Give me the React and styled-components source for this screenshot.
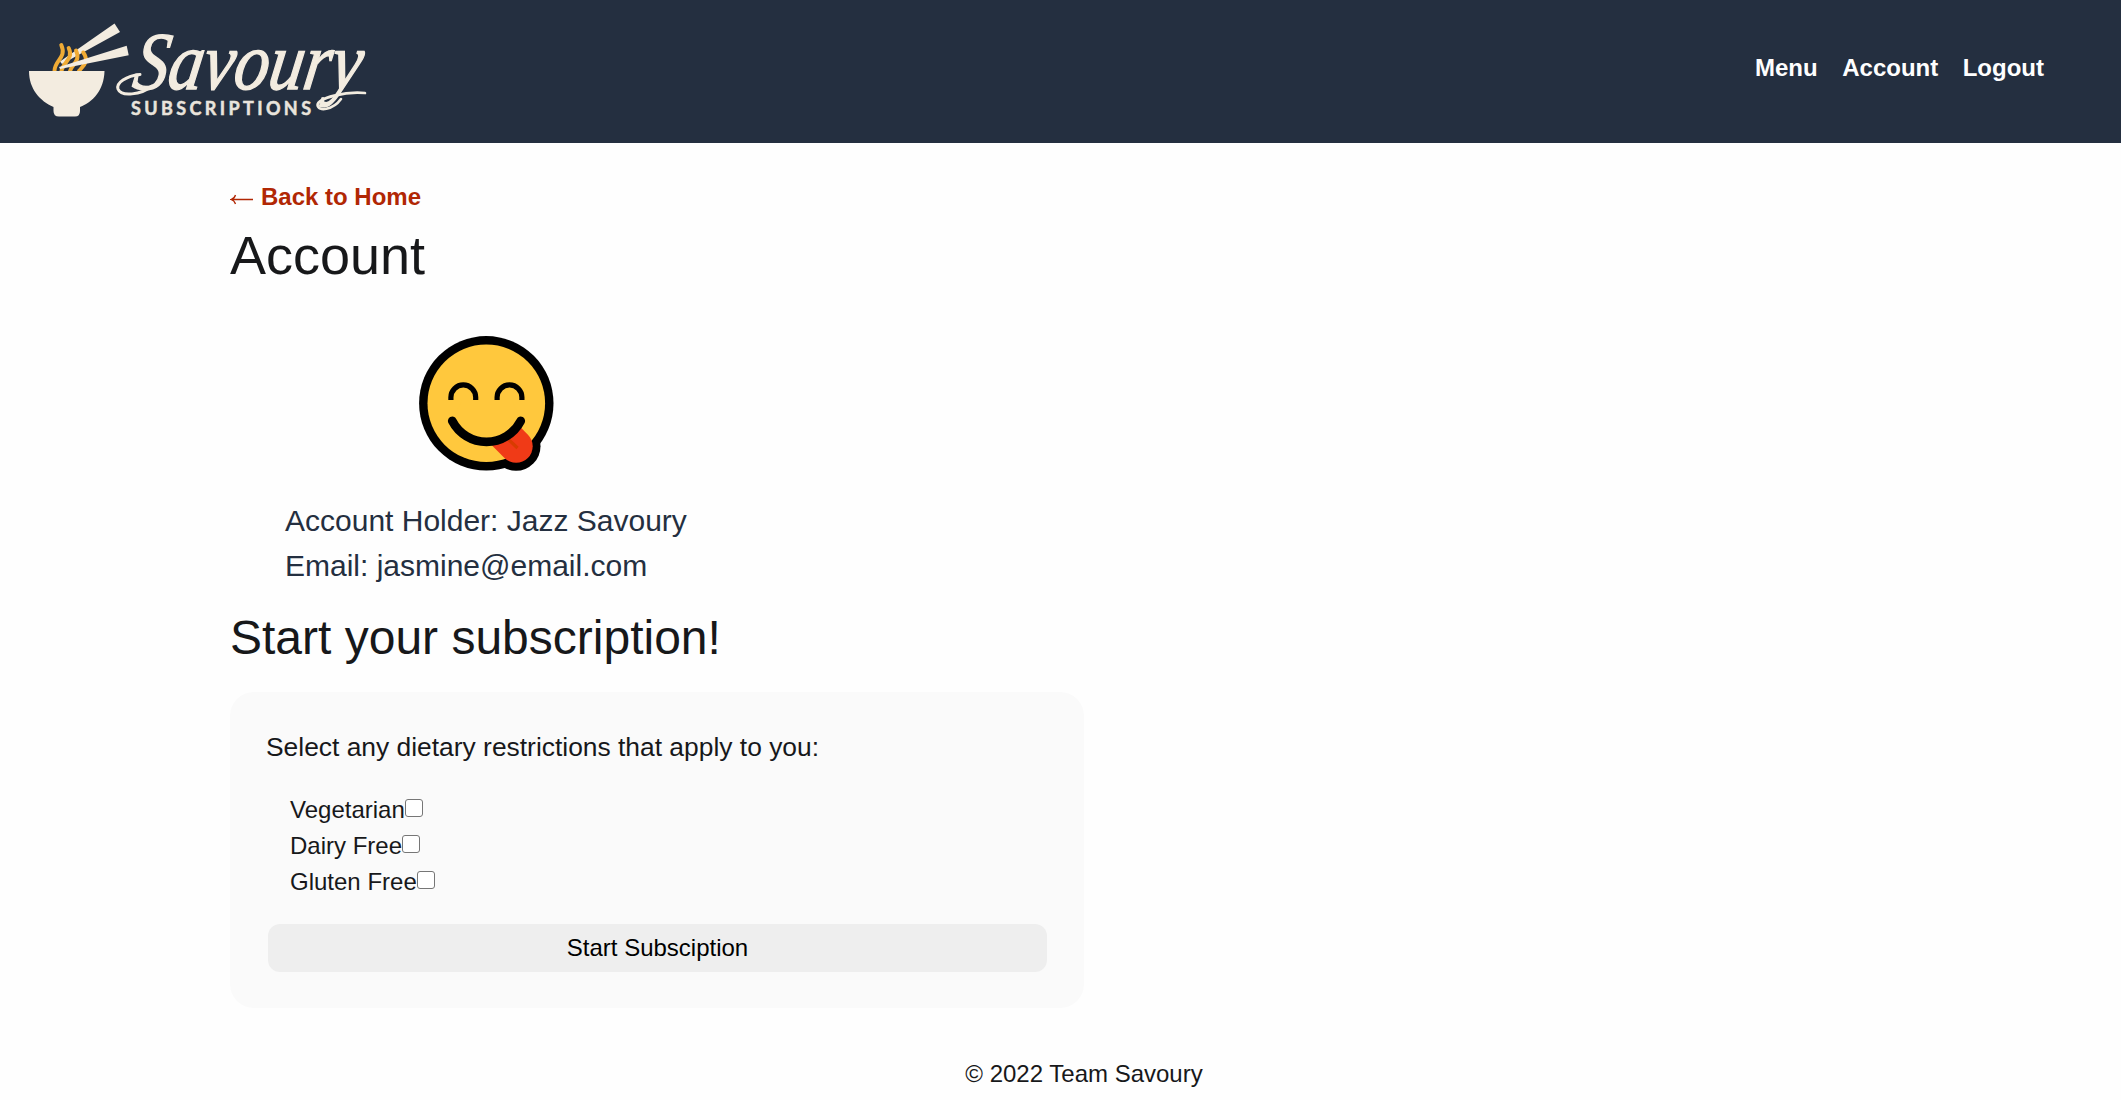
import React from "react";
import styled, { createGlobalStyle } from "styled-components";

const Global = createGlobalStyle`
  * { box-sizing: border-box; }
  body {
    margin: 0;
    background: #fefefe;
    color: #17181a;
    font-family: "Liberation Sans", Arial, sans-serif;
    font-size: 24px;
    line-height: 36px;
  }
  h1, h2, p { margin: 0; font-weight: 400; }
`;

const Header = styled.header`
  display: flex;
  justify-content: space-between;
  align-items: flex-start;
  height: 143px;
  padding: 0 77px 0 24px;
  background: #242f40;
`;

const Logo = styled.svg`
  display: block;
  width: 400px;
  height: 140px;
`;

const Nav = styled.nav`
  display: flex;
  gap: 24.5px;
  padding-top: 50px;
`;

const NavLink = styled.a`
  color: #fefefe;
  font-weight: 700;
`;

const Main = styled.main`
  display: flex;
  flex-direction: column;
  align-items: flex-start;
  width: 1708px;
  margin-left: 230px;
  padding-top: 36px;
`;

const BackLink = styled.a`
  display: flex;
  align-items: center;
  gap: 7px;
  color: #b12704;
  font-weight: 700;
`;

const Arrow = styled.svg`
  width: 24px;
  height: 12px;
  margin-top: 5px;
`;

const PageTitle = styled.h1`
  margin-top: 8px;
  font-size: 54px;
  line-height: 65px;
`;

const Profile = styled.section`
  display: flex;
  flex-direction: column;
  margin: 32px 0 0 55px;
  color: #242f40;
  font-size: 30px;
  line-height: 45px;
`;

const Avatar = styled.svg`
  align-self: center;
  width: 170px;
  height: 160px;
  margin: 0 2px 18px 0;
`;

const SectionTitle = styled.h2`
  margin-top: 21px;
  font-size: 48px;
  line-height: 58px;
`;

const Card = styled.form`
  display: flex;
  flex-direction: column;
  width: 854px;
  height: 316px;
  margin-top: 25px;
  padding: 36px 37px 36px 36px;
  border-radius: 24px;
  background: #fafafa;
`;

const Prompt = styled.p`
  font-size: 26.4px;
  line-height: 39px;
`;

const Options = styled.div`
  display: flex;
  flex-direction: column;
  padding: 25px 0 0 24px;
`;

const Option = styled.label`
  display: flex;
  align-items: center;
`;

const Checkbox = styled.input`
  appearance: none;
  width: 18px;
  height: 18px;
  margin: 0 0 4px;
  border: 1px solid #767676;
  border-radius: 3px;
  background: #fff;
`;

const Submit = styled.button`
  height: 48px;
  margin: auto 0 0 2px;
  border: 0;
  border-radius: 12px;
  background: #eee;
  color: #000;
  font: inherit;
`;

const Footer = styled.footer`
  align-self: center;
  margin-top: 48px;
`;

function SavouryLogo() {
  return (
    <Logo viewBox="24 0 400 140" role="img" aria-label="Savoury Subscriptions">
      <path d="M60 61.500 114.500 23.500 120 32 62 64Z" fill="#f3ece0" />
      <g fill="none" stroke="#f0ab35" strokeWidth="4" strokeLinecap="round">
        <path d="M61.300 45C67 58 54.500 60 54.500 71" />
        <path d="M68.700 48C74 59 63 62 61.500 71" />
        <path d="M76 50.500C81 61 72 64 70 71" />
        <path d="M83.300 52.500C90 62 82 67 79 71" />
      </g>
      <g fill="#f3ece0">
        <path d="M59 67 126.700 45.700 128.700 55.300 60 69Z" />
        <path d="M29 71H104.500C104 90 93 102 80 107V111Q80 116.500 75 116.500H59Q53.500 116.500 53.500 111V107C40 101 29 89 29 71Z" />
      </g>
      <g fill="none" stroke="#f3ece0" strokeLinecap="round">
        <path d="M140 74.500C126 76 116 83 118 89C121 97 141 95 152 86" strokeWidth="3" />
        <path d="M365 93C346 91 318 98 317.500 105C318 112 333 110 341 99" strokeWidth="2.600" />
      </g>
      <text
        transform="translate(131 89) skewX(-9)"
        fill="#f3ece0"
        stroke="#f3ece0"
        strokeWidth="1.400"
        fontFamily="Liberation Serif, serif"
        fontStyle="italic"
        fontSize="82"
        textLength="228"
        lengthAdjust="spacingAndGlyphs"
      >
        Savoury
      </text>
      <text
        x="131"
        y="114.500"
        fill="#e9e4dc"
        stroke="#e9e4dc"
        strokeWidth="0.500"
        fontFamily="Lato, sans-serif"
        fontWeight="700"
        fontSize="18"
        textLength="180"
        lengthAdjust="spacing"
      >
        SUBSCRIPTIONS
      </text>
    </Logo>
  );
}

function YumFace() {
  return (
    <Avatar viewBox="0 0 170 160" aria-hidden="true">
      <circle cx="86.300" cy="83.300" r="67.200" fill="#000" />
      <circle cx="116" cy="126.300" r="24.500" fill="#000" />
      <circle cx="86.300" cy="83.300" r="58.800" fill="#ffc83d" />
      <path d="M98 108 116.200 126.300" stroke="#f03a17" strokeWidth="33" strokeLinecap="round" />
      <path d="M109 120 117.500 128" stroke="#d83b01" strokeWidth="3.200" />
      <path d="M52.300 101A38.500 38.500 0 0 0 120.700 101L112 80H62Z" fill="#ffc83d" />
      <g fill="none" stroke="#000">
        <path d="M52.300 101A38.500 38.500 0 0 0 120.700 101" strokeWidth="8.800" strokeLinecap="round" />
        <path d="M50.900 80V77.300A12.400 12.400 0 0 1 75.700 77.300V80M97.100 80V77.300A12.400 12.400 0 0 1 121.900 77.300V80" strokeWidth="5.200" />
      </g>
    </Avatar>
  );
}

const links = ["Menu", "Account", "Logout"];
const restrictions = ["Vegetarian", "Dairy Free", "Gluten Free"];

export default function App() {
  return (
    <>
      <Global />
      <Header>
        <SavouryLogo />
        <Nav>
          {links.map((name) => (
            <NavLink key={name}>{name}</NavLink>
          ))}
        </Nav>
      </Header>
      <Main>
        <BackLink>
          <Arrow viewBox="0 0 24 12" fill="none" stroke="currentColor" strokeWidth="1.300">
            <path d="M1 5.500H23M5.500 1Q4.500 4.500 1 5.500Q4.500 6.500 5.500 10" />
          </Arrow>
          Back to Home
        </BackLink>
        <PageTitle>Account</PageTitle>
        <Profile>
          <YumFace />
          <p>Account Holder: Jazz Savoury</p>
          <p>Email: jasmine@email.com</p>
        </Profile>
        <SectionTitle>Start your subscription!</SectionTitle>
        <Card>
          <Prompt>Select any dietary restrictions that apply to you:</Prompt>
          <Options>
            {restrictions.map((name) => (
              <Option key={name}>
                {name}
                <Checkbox type="checkbox" />
              </Option>
            ))}
          </Options>
          <Submit type="button">Start Subsciption</Submit>
        </Card>
        <Footer>© 2022 Team Savoury</Footer>
      </Main>
    </>
  );
}
